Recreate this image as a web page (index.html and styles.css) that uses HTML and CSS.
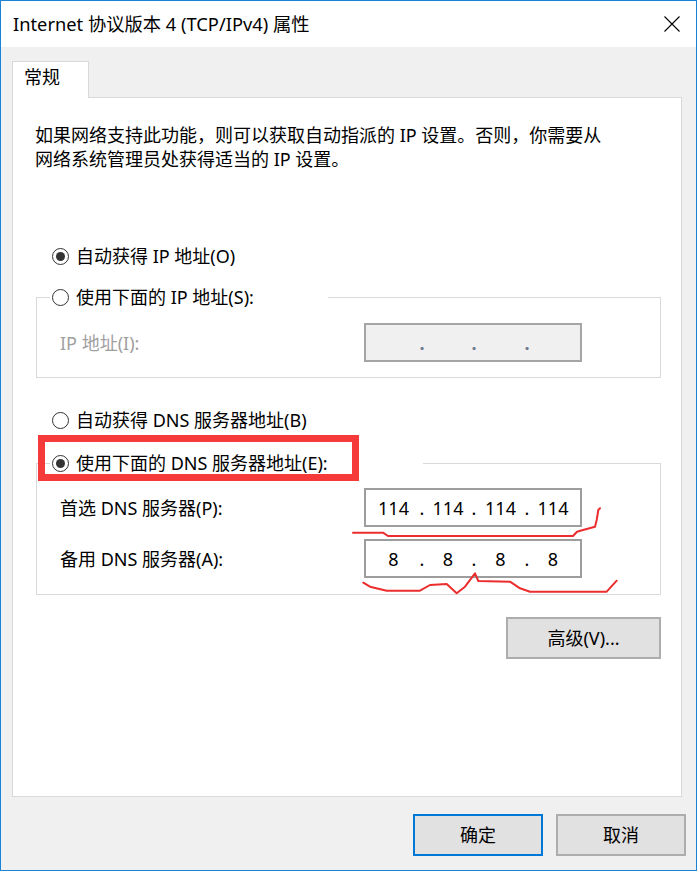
FILE: index.html
```html
<!DOCTYPE html>
<html lang="zh-CN">
<head>
<meta charset="utf-8">
<title>Internet 协议版本 4 (TCP/IPv4) 属性</title>
<link rel="stylesheet" href="styles.css">
</head>
<body>
<div class="window">
  <header class="titlebar">
    <span class="title">Internet 协议版本 4 (TCP/IPv4) 属性</span>
    <svg class="close" width="16" height="16" viewBox="0 0 16 16" aria-label="关闭"><path d="M0.5 0.5 L15.5 15.5 M15.5 0.5 L0.5 15.5" stroke="#000" stroke-width="1.1" fill="none"/></svg>
  </header>
  <div class="client">
    <div class="tabs"><div class="tab">常规</div></div>
    <div class="panel">
      <p class="intro">如果网络支持此功能，则可以获取自动指派的 IP 设置。否则，你需要从<br>网络系统管理员处获得适当的 IP 设置。</p>

      <div class="radio checked r1"><span class="dot"></span><span>自动获得 IP 地址(O)</span></div>

      <fieldset class="group g1">
        <legend class="legend l1"><span class="radio"><span class="dot"></span><span>使用下面的 IP 地址(S):</span></span></legend>
        <div class="field first disabled">
          <span class="label">IP 地址(I):</span>
          <div class="ip off"><span></span><i>.</i><span></span><i>.</i><span></span><i>.</i><span></span></div>
        </div>
      </fieldset>

      <div class="radio r3"><span class="dot"></span><span>自动获得 DNS 服务器地址(B)</span></div>

      <fieldset class="group g2">
        <legend class="legend l2"><span class="radio checked"><span class="dot"></span><span>使用下面的 DNS 服务器地址(E):</span></span></legend>
        <div class="field first">
          <span class="label">首选 DNS 服务器(P):</span>
          <div class="ip"><span>114</span><i>.</i><span>114</span><i>.</i><span>114</span><i>.</i><span>114</span></div>
        </div>
        <div class="field second">
          <span class="label">备用 DNS 服务器(A):</span>
          <div class="ip"><span>8</span><i>.</i><span>8</span><i>.</i><span>8</span><i>.</i><span>8</span></div>
        </div>
      </fieldset>

      <div class="adv-row"><button class="btn adv">高级(V)...</button></div>
    </div>
    <div class="footer">
      <button class="btn primary">确定</button>
      <button class="btn">取消</button>
    </div>
  </div>

  <svg class="annot" width="697" height="871" viewBox="0 0 697 871">
    <rect x="41.5" y="438.5" width="314" height="39" fill="none" stroke="#f63a3a" stroke-width="7"/>
    <path d="M353 532.7 L383 532.7 L388 536 L573 536 L577 531.7 L583 530 L595 526.7 L596.7 520 L598.3 510 L600 508.3" fill="none" stroke="#ec2d2d" stroke-width="2" stroke-linejoin="round" stroke-linecap="round"/>
    <path d="M363.3 582.7 L370 586.7 L386.7 590.7 L420 590.7 L430 585 L446.7 584 L456.7 593.3 L465 586.7 L475 573.3 L478.3 581 L510 581.7 L520 588.3 L530 591.7 L606.7 591.7 L616.7 580.7" fill="none" stroke="#ec2d2d" stroke-width="2" stroke-linejoin="round" stroke-linecap="round"/>
  </svg>
</div>
</body>
</html>
```

FILE: styles.css
```css
* { box-sizing: border-box; }

html, body {
  margin: 0;
  padding: 0;
  background: #f0f0f0;
}

body {
  font-family: "Noto Sans", "Noto Sans CJK SC", sans-serif;
  font-size: 18px;
  color: #000;
}

.window {
  position: relative;
  width: 697px;
  height: 871px;
  border: 1px solid #1883d7;
  background: #f0f0f0;
  display: flex;
  flex-direction: column;
}

.titlebar {
  height: 46px;
  background: #fff;
  display: flex;
  align-items: center;
  justify-content: space-between;
  padding: 0 16px 0 12px;
  flex: none;
}

.title {
  font-size: 18.3px;
  line-height: 24px;
  white-space: nowrap;
}

.close { display: block; }

.client {
  flex: 1;
  padding: 14px 0 0 11px;
  display: flex;
  flex-direction: column;
}

.tabs {
  display: flex;
  height: 36px;
}

.tab {
  position: relative;
  z-index: 1;
  width: 77px;
  height: 37px;
  background: #fff;
  border: 1px solid #d9d9d9;
  border-bottom: none;
  padding: 3px 0 0 11px;
  line-height: 24px;
}

.panel {
  width: 670px;
  height: 700px;
  background: #fff;
  border: 1px solid #d9d9d9;
  padding: 0 20px 0 23px;
  display: flex;
  flex-direction: column;
}

.intro {
  margin: 25px 0 0 -1px;
  line-height: 24px;
  white-space: nowrap;
}

.radio {
  display: flex;
  align-items: center;
  height: 24px;
  line-height: 24px;
  white-space: nowrap;
}

.radio .dot {
  flex: none;
  width: 17px;
  height: 17px;
  border: 1.5px solid #333;
  border-radius: 50%;
  margin-right: 7px;
  display: flex;
  align-items: center;
  justify-content: center;
  background: #fff;
}

.radio.checked .dot::after {
  content: "";
  width: 9px;
  height: 9px;
  border-radius: 50%;
  background: #333;
}

.r1 { margin: 73px 0 0 16px; }
.r3 { margin: 30px 0 0 16px; }

.group {
  margin: 0;
  padding: 0 0 15px 13px;
  border: 1px solid #d9d9d9;
  min-width: 0;
}

.g1 { margin-top: 17px; }
.g2 { margin-top: 19px; padding-bottom: 16px; }

.legend {
  padding: 0 2px;
  height: 24px;
}

.l1 { width: 278px; }
.l2 { width: 373px; }

.field {
  display: flex;
  align-items: center;
  padding-left: 10px;
  height: 39px;
}

.g1 .field.first { margin-top: 14px; }
.g2 .field.first { margin-top: 13px; }
.g2 .field.second { margin-top: 12px; }

.label {
  width: 304px;
  flex: none;
  line-height: 24px;
  white-space: nowrap;
}

.disabled .label { color: #a0a0a0; }

.ip {
  width: 218px;
  height: 39px;
  border: 2px solid #9d9d9d;
  background: #fff;
  display: grid;
  grid-template-columns: 51px 6px 46px 6px 47px 6px 46px;
  align-items: center;
  padding-left: 2px;
  font-family: "Noto Sans", sans-serif;
  font-size: 18px;
  line-height: 24px;
}

.ip span { text-align: center; }
.ip i { font-style: normal; text-align: center; }

.ip.off {
  background: #f0f0f0;
  border-color: #a5a5a5;
}
.ip.off i { color: #6c7c90; font-weight: bold; }

.adv-row {
  display: flex;
  justify-content: flex-end;
  margin-top: 22px;
}

.btn {
  font-family: "Noto Sans", "Noto Sans CJK SC", sans-serif;
  font-size: 18px;
  color: #000;
  background: #e1e1e1;
  border: 2px solid #adadad;
  height: 42px;
  width: 130px;
  padding: 0;
  line-height: 24px;
}

.adv { width: 155px; }

.btn.primary { border-color: #0078d7; }

.footer {
  display: flex;
  justify-content: flex-end;
  gap: 13px;
  padding: 17px 10px 0 0;
}

.annot {
  position: absolute;
  left: -1px;
  top: -1px;
  pointer-events: none;
}
```
